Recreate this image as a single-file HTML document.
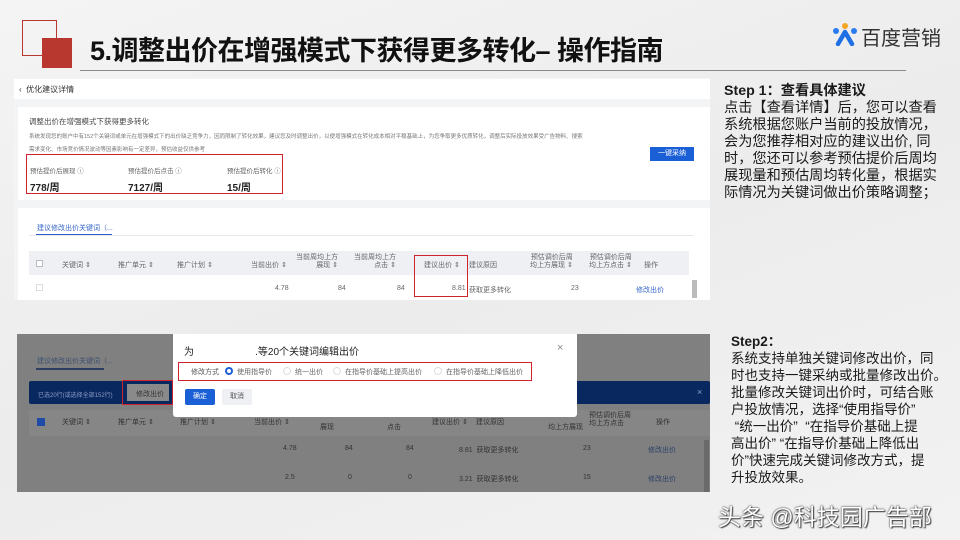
<!DOCTYPE html>
<html><head><meta charset="utf-8"><style>
*{margin:0;padding:0;box-sizing:border-box}
body{width:960px;height:540px;position:relative;overflow:hidden;background:linear-gradient(160deg,#f4f4f4 0%,#ececec 50%,#f2f2f2 100%);font-family:"Liberation Sans","Noto Sans CJK SC",sans-serif;color:#222}
.a{position:absolute}
.t{font-size:7px;color:#666;white-space:nowrap}
.rt{font-size:14.2px;line-height:17px;color:#1a1a1a;white-space:nowrap}
</style></head><body>
<div class="a" style="left:22px;top:20px;width:35px;height:36px;border:1.5px solid #b8372f"></div>
<div class="a" style="left:42px;top:38px;width:30px;height:30px;background:#b8372f"></div>
<div class="a" style="left:90px;top:29px;font-size:27px;font-weight:bold;color:#111;white-space:nowrap;letter-spacing:-0.5px">5.调整出价在增强模式下获得更多转化– 操作指南</div>
<div class="a" style="left:80px;top:70px;width:826px;height:1px;background:#8a8a8a"></div>
<svg class="a" style="left:832px;top:22px" width="26" height="24" viewBox="0 0 26 24">
<circle cx="4" cy="9" r="3" fill="#2b7bf0"/><circle cx="13" cy="4" r="3" fill="#f5a623"/><circle cx="22" cy="9" r="3" fill="#2b7bf0"/>
<path d="M13 10 L6 22 M13 10 L20 22" stroke="#1f6fe5" stroke-width="4.5" stroke-linecap="round" fill="none"/>
</svg>
<div class="a" style="left:861px;top:22px;font-size:20px;color:#333;white-space:nowrap">百度营销</div>

<div class="a" style="left:14px;top:78px;width:696px;height:222px;background:#f3f4f6"></div>
<div class="a" style="left:14px;top:79px;width:696px;height:20px;background:#fff"></div>
<div class="a t" style="left:19px;top:84px;font-size:8px;color:#333">‹&nbsp;&nbsp;优化建议详情</div>
<div class="a" style="left:18px;top:107px;width:692px;height:93px;background:#fff"></div>
<div class="a t" style="left:29px;top:116px;font-size:7.5px;color:#444">调整出价在增强模式下获得更多转化</div>
<div class="a t" style="left:29px;top:132px;font-size:5.5px;color:#777">系统发现您的账户中有152个关键词或单元在增强模式下的出价缺乏竞争力，因而限制了转化效果，建议您及时调整出价，以便增强模式在转化成本相对平稳基础上，为您争取更多优质转化，调整后实际投放效果受广告物料、搜索</div>
<div class="a t" style="left:29px;top:145px;font-size:5.5px;color:#777">需求变化、市场竞价情况波动等因素影响有一定差异，预估收益仅供参考</div>
<div class="a" style="left:650px;top:147px;width:44px;height:14px;background:#1a5fd6;color:#fff;font-size:7px;text-align:center;line-height:14px">一键采纳</div>
<div class="a" style="left:26px;top:154px;width:257px;height:40px;border:1.5px solid #d0232b"></div>
<div class="a t" style="left:30px;top:165px;font-size:6.5px">预估提价后展现 ⓘ</div>
<div class="a t" style="left:128px;top:165px;font-size:6.5px">预估提价后点击 ⓘ</div>
<div class="a t" style="left:227px;top:165px;font-size:6.5px">预估提价后转化 ⓘ</div>
<div class="a" style="left:30px;top:179px;font-size:10px;font-weight:bold;color:#222">778/周</div>
<div class="a" style="left:128px;top:179px;font-size:10px;font-weight:bold;color:#222">7127/周</div>
<div class="a" style="left:227px;top:179px;font-size:10px;font-weight:bold;color:#222">15/周</div>
<div class="a" style="left:18px;top:208px;width:692px;height:92px;background:#fff"></div>
<div class="a t" style="left:37px;top:223px;color:#3566c8">建议修改出价关键词（...</div>
<div class="a" style="left:36px;top:234px;width:76px;height:1.5px;background:#2a5bd0"></div>
<div class="a" style="left:29px;top:235px;width:665px;height:1px;background:#e8e8e8"></div>
<div class="a" style="left:29px;top:251px;width:660px;height:24px;background:#eef0f4"></div>
<div class="a" style="left:36px;top:260px;width:7px;height:7px;border:1px solid #bbb;background:#fff"></div>
<div class="a t" style="left:62px;top:260px">关键词 ⇕</div>
<div class="a t" style="left:118px;top:260px">推广单元 ⇕</div>
<div class="a t" style="left:177px;top:260px">推广计划 ⇕</div>
<div class="a t" style="left:251px;top:260px">当前出价 ⇕</div>
<div class="a t" style="left:296px;top:254px;text-align:right;line-height:8px">当前周均上方<br>展现 ⇕</div>
<div class="a t" style="left:354px;top:254px;text-align:right;line-height:8px">当前周均上方<br>点击 ⇕</div>
<div class="a t" style="left:424px;top:260px">建议出价 ⇕</div>
<div class="a t" style="left:469px;top:260px">建议原因</div>
<div class="a t" style="left:530px;top:254px;text-align:right;line-height:8px">预估调价后周<br>均上方展现 ⇕</div>
<div class="a t" style="left:589px;top:254px;text-align:right;line-height:8px">预估调价后周<br>均上方点击 ⇕</div>
<div class="a t" style="left:644px;top:260px">操作</div>
<div class="a" style="left:36px;top:284px;width:7px;height:7px;border:1px solid #ddd"></div>
<div class="a t" style="left:275px;top:285px">4.78</div>
<div class="a t" style="left:338px;top:285px">84</div>
<div class="a t" style="left:397px;top:285px">84</div>
<div class="a t" style="left:452px;top:285px">8.81</div>
<div class="a t" style="left:469px;top:285px">获取更多转化</div>
<div class="a t" style="left:571px;top:285px">23</div>
<div class="a t" style="left:636px;top:285px;color:#3566c8">修改出价</div>
<div class="a" style="left:692px;top:280px;width:5px;height:18px;background:#bbb"></div>
<div class="a" style="left:414px;top:255px;width:54px;height:42px;border:1.5px solid #d0232b"></div>

<div class="a" style="left:17px;top:334px;width:693px;height:158px;background:#808080"></div>
<div class="a t" style="left:37px;top:356px;color:#3d4f70">建议修改出价关键词（...</div>
<div class="a" style="left:36px;top:368px;width:68px;height:1.5px;background:#2e3e60"></div>
<div class="a" style="left:29px;top:381px;width:681px;height:23px;background:#0a2860;border-radius:2px"></div>
<div class="a t" style="left:38px;top:390px;color:#8a9cc4;font-size:6px">已选20行(或选择全部152行)</div>
<div class="a" style="left:127px;top:384px;width:42px;height:17px;background:#8a8a8a"></div>
<div class="a t" style="left:136px;top:389px;color:#333">修改出价</div>
<div class="a" style="left:122px;top:380px;width:51px;height:25px;border:1.5px solid #d0232b"></div>
<div class="a t" style="left:697px;top:387px;color:#8a9cc4;font-size:9px">×</div>
<div class="a" style="left:29px;top:410px;width:681px;height:26px;background:#868686"></div>
<div class="a" style="left:37px;top:418px;width:8px;height:8px;background:#1f4ba8"></div>
<div class="a t" style="left:62px;top:417px;color:#333">关键词 ⇕</div>
<div class="a t" style="left:118px;top:417px;color:#333">推广单元 ⇕</div>
<div class="a t" style="left:180px;top:417px;color:#333">推广计划 ⇕</div>
<div class="a t" style="left:254px;top:417px;color:#333">当前出价 ⇕</div>
<div class="a t" style="left:320px;top:422px;color:#333">展现</div>
<div class="a t" style="left:387px;top:422px;color:#333">点击</div>
<div class="a t" style="left:432px;top:417px;color:#333">建议出价 ⇕</div>
<div class="a t" style="left:476px;top:417px;color:#333">建议原因</div>
<div class="a t" style="left:548px;top:422px;color:#333">均上方展现</div>
<div class="a t" style="left:589px;top:412px;color:#333;line-height:8px">预估调价后周<br>均上方点击</div>
<div class="a t" style="left:656px;top:417px;color:#333">操作</div>
<div class="a t" style="left:283px;top:445px;color:#333">4.78</div><div class="a t" style="left:345px;top:445px;color:#333">84</div><div class="a t" style="left:406px;top:445px;color:#333">84</div><div class="a t" style="left:459px;top:445px;color:#333">8.81 &nbsp;获取更多转化</div><div class="a t" style="left:583px;top:445px;color:#333">23</div><div class="a t" style="left:648px;top:445px;color:#2c3f68">修改出价</div>
<div class="a t" style="left:285px;top:474px;color:#333">2.5</div><div class="a t" style="left:348px;top:474px;color:#333">0</div><div class="a t" style="left:408px;top:474px;color:#333">0</div><div class="a t" style="left:459px;top:474px;color:#333">3.21 &nbsp;获取更多转化</div><div class="a t" style="left:583px;top:474px;color:#333">15</div><div class="a t" style="left:648px;top:474px;color:#2c3f68">修改出价</div>
<div class="a" style="left:704px;top:440px;width:5px;height:52px;background:#6a6a6a"></div>
<div class="a" style="left:173px;top:334px;width:404px;height:83px;background:#fff;border-radius:0 0 3px 3px"></div>
<div class="a" style="left:184px;top:343px;font-size:10px;color:#222;white-space:nowrap">为&nbsp;&nbsp;&nbsp;&nbsp;&nbsp;&nbsp;&nbsp;&nbsp;&nbsp;&nbsp;&nbsp;&nbsp;&nbsp;&nbsp;&nbsp;&nbsp;&nbsp;&nbsp;&nbsp;&nbsp;&nbsp;&nbsp;.等20个关键词编辑出价</div>
<div class="a" style="left:557px;top:342px;font-size:11px;color:#888">×</div>
<div class="a" style="left:178px;top:362px;width:354px;height:19px;border:1.5px solid #d0232b"></div>
<div class="a t" style="left:191px;top:367px;color:#555">修改方式</div>
<div class="a" style="left:225px;top:367px;width:8px;height:8px;border-radius:50%;border:2.5px solid #1a5fd6"></div>
<div class="a t" style="left:237px;top:367px">使用指导价</div>
<div class="a" style="left:283px;top:367px;width:8px;height:8px;border-radius:50%;border:1px solid #ddd"></div>
<div class="a t" style="left:295px;top:367px">统一出价</div>
<div class="a" style="left:333px;top:367px;width:8px;height:8px;border-radius:50%;border:1px solid #ddd"></div>
<div class="a t" style="left:345px;top:367px">在指导价基础上提高出价</div>
<div class="a" style="left:434px;top:367px;width:8px;height:8px;border-radius:50%;border:1px solid #ddd"></div>
<div class="a t" style="left:446px;top:367px">在指导价基础上降低出价</div>
<div class="a" style="left:185px;top:389px;width:30px;height:16px;background:#1a5fd6;color:#fff;font-size:7px;text-align:center;line-height:16px;border-radius:2px">确定</div>
<div class="a" style="left:222px;top:389px;width:30px;height:16px;background:#eef0f4;color:#555;font-size:7px;text-align:center;line-height:16px;border-radius:2px">取消</div>

<div class="a rt" style="left:724px;top:83px"><b>Step 1：查看具体建议</b><br>点击【查看详情】后，您可以查看<br>系统根据您账户当前的投放情况，<br>会为您推荐相对应的建议出价, 同<br>时，您还可以参考预估提价后周均<br>展现量和预估周均转化量，根据实<br>际情况为关键词做出价策略调整；</div>
<div class="a rt" style="left:731px;top:333px;font-size:13.5px"><b>Step2：</b><br>系统支持单独关键词修改出价，同<br>时也支持一键采纳或批量修改出价。<br>批量修改关键词出价时，可结合账<br>户投放情况，选择“使用指导价”<br>&nbsp;“统一出价” &nbsp;“在指导价基础上提<br>高出价” “在指导价基础上降低出<br>价”快速完成关键词修改方式，提<br>升投放效果。</div>
<div class="a" style="left:718px;top:498px;font-size:23px;color:#fff;white-space:nowrap;text-shadow:0 0 1px #333,0 0 2px #555,1px 1px 1px #444">头条 @科技园广告部</div>
</body></html>
